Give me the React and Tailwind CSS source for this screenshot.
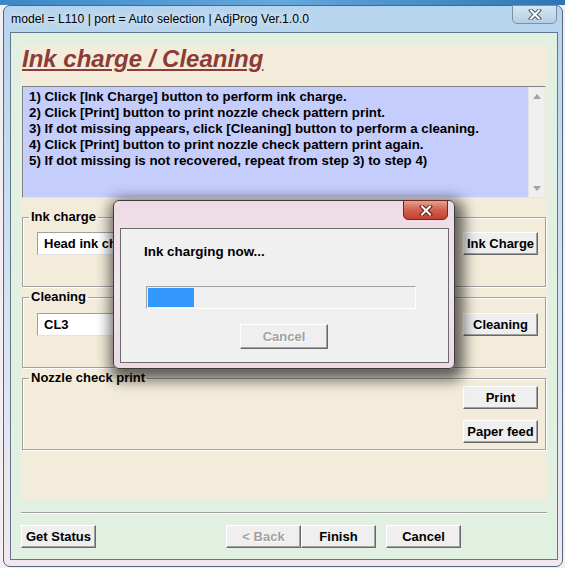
import React from "react";

// classic 3D push button
const btn =
  "h-[23px] bg-[#efefef] border border-t-white border-l-white border-r-[#696969] border-b-[#696969] shadow-[inset_-1px_-1px_0_#a0a0a0] text-[13px] leading-[16px] font-bold text-black flex items-center justify-center";
const btnOff =
  "h-[23px] bg-[#efefef] border border-t-white border-l-white border-r-[#696969] border-b-[#696969] shadow-[inset_-1px_-1px_0_#a0a0a0] text-[13px] leading-[16px] font-bold text-[#a0a0a0] [text-shadow:1px_1px_0_#fff] flex items-center justify-center";
const combo =
  "h-[23px] bg-white border border-t-[#a0a0a0] border-l-[#a0a0a0] border-r-[#e3e3e3] border-b-[#e3e3e3] pl-[6px] text-[13px] leading-[21px] font-bold";
const fieldset =
  "ml-[1px] w-[524px] border border-[#a0a0a0] shadow-[1px_1px_0_#fff,inset_1px_1px_0_#fff]";
const legend = "ml-[6px] px-[2px] text-[13px] leading-[16px] font-bold text-black";

const steps = [
  "1) Click [Ink Charge] button to perform ink charge.",
  "2) Click [Print] button to print nozzle check pattern print.",
  "3) If dot missing appears, click [Cleaning] button to perform a cleaning.",
  "4) Click [Print] button to print nozzle check pattern print again.",
  "5) If dot missing is not recovered, repeat from step 3) to step 4)",
];

// X glyph used on caption close buttons
const CloseGlyph = ({ dark }) => (
  <svg width="14" height="11" viewBox="0 0 14 11">
    <path d="M3 1.5 L11 9.5 M11 1.5 L3 9.5" stroke={dark} strokeWidth="4" strokeLinecap="square" />
    <path d="M3 1.5 L11 9.5 M11 1.5 L3 9.5" stroke="#ffffff" strokeWidth="2" strokeLinecap="square" />
  </svg>
);

const ProgressDialog = () => (
  <div className="absolute left-[113px] top-[200px] w-[342px] h-[169px] rounded-[6px] border border-[#3c3c3c] bg-gradient-to-b from-[#eedbe5] via-[#f3e6ee] to-[#ecd9e4] shadow-[3px_5px_14px_6px_rgba(0,0,0,0.6)]">
    <div className="absolute top-[-1px] right-[6px] w-[45px] h-[20px] rounded-b-[5px] border border-[#6e2a20] bg-gradient-to-b from-[#e5a193] via-[#d0604c] to-[#c2412c] flex items-center justify-center">
      <CloseGlyph dark="#5a1f17" />
    </div>
    <div className="ml-[6px] mt-[27px] w-[329px] h-[135px] border border-[#6b6b6b] bg-[#f0f0f0]">
      <div className="pl-[23px] pt-[15px] text-[13.4px] leading-[16px] font-bold text-black">
        Ink charging now...
      </div>
      <div className="ml-[25px] mt-[26px] w-[270px] h-[23px] border border-t-[#a0a0a0] border-l-[#a0a0a0] border-r-white border-b-white p-[1px]">
        <div className="w-[46px] h-full bg-[#3399ff]" />
      </div>
      <div className="ml-[119px] mt-[15px] w-[88px]">
        <div className={btnOff + " h-[25px]"}>Cancel</div>
      </div>
    </div>
  </div>
);

export default function App() {
  return (
    <div className="relative w-[565px] h-[568px] overflow-hidden bg-[#f4eef2] font-['Liberation_Sans',Arial,sans-serif]">
      {/* desktop behind */}
      <div className="h-[5px] bg-gradient-to-r from-[#3b87c6] via-[#63a9dc] to-[#2d74b2]" />

      {/* main window */}
      <div className="relative ml-[3px] w-[560px] h-[562px] rounded-[7px] border border-[#51677e] bg-gradient-to-b from-[#b6d4ed] via-[#d2e3f1] to-[#f2e8ef]">
        <div className="absolute top-[-1px] right-[5px] w-[45px] h-[19px] rounded-b-[5px] border border-[#7d90a6] bg-gradient-to-b from-[#d6e7f5] to-[#b4cde4] flex items-center justify-center">
          <CloseGlyph dark="#4a5866" />
        </div>

        {/* caption */}
        <div className="h-[26px] pl-[7px] flex items-center text-[12.2px] text-black [text-shadow:0_0_6px_#ffffff]">
          model = L110 | port = Auto selection | AdjProg Ver.1.0.0
        </div>

        {/* client area */}
        <div className="ml-[6px] w-[548px] h-[528px] border border-[#62778d] bg-[#e2f0e2] pl-[10px] pt-[12px]">
          <div className="w-[527px] h-[454px] bg-[#f3ecda]">
            <div className="h-[41px] pl-[1px] text-[24px] leading-[28px] font-bold italic underline decoration-2 underline-offset-[2px] text-[#8c3b37]">
              Ink charge / Cleaning
            </div>

            {/* instructions box */}
            <div className="ml-[1px] w-[524px] h-[112px] flex bg-[#c5cdfd] border border-t-[#828282] border-l-[#828282] border-r-[#e6e6e6] border-b-[#e6e6e6]">
              <div className="flex-1 pl-[6px] pt-[2px] text-[13.3px] leading-[16px] font-bold text-black">
                {steps.map((s) => (
                  <div key={s}>{s}</div>
                ))}
              </div>
              <div className="w-[17px] bg-[#efefef] border-l border-[#e4e4e4] flex flex-col items-center justify-between pt-[7px] pb-[6px]">
                <svg width="8" height="5" viewBox="0 0 8 5">
                  <path d="M0 5 L4 0 L8 5 Z" fill="#a3a3a3" />
                </svg>
                <svg width="8" height="5" viewBox="0 0 8 5">
                  <path d="M0 0 L8 0 L4 5 Z" fill="#a3a3a3" />
                </svg>
              </div>
            </div>

            {/* Ink charge */}
            <fieldset className={fieldset + " mt-[11px]"}>
              <legend className={legend}>Ink charge</legend>
              <div className="h-[61px] pt-[7px] pl-[14px] pr-[7px] flex items-start justify-between">
                <div className={combo + " w-[300px]"}>Head ink charge</div>
                <div className={btn + " w-[75px]"}>Ink Charge</div>
              </div>
            </fieldset>

            {/* Cleaning */}
            <fieldset className={fieldset + " mt-[2px]"}>
              <legend className={legend}>Cleaning</legend>
              <div className="h-[62px] pt-[8px] pl-[14px] pr-[7px] flex items-start justify-between">
                <div className={combo + " w-[300px]"}>CL3</div>
                <div className={btn + " w-[75px]"}>Cleaning</div>
              </div>
            </fieldset>

            {/* Nozzle check print */}
            <fieldset className={fieldset + " mt-[2px]"}>
              <legend className={legend}>Nozzle check print</legend>
              <div className="h-[63px] pr-[7px] flex flex-col items-end">
                <div className={btn + " w-[75px] h-[22px]"}>Print</div>
                <div className={btn + " w-[75px] mt-[11px]"}>Paper feed</div>
              </div>
            </fieldset>
          </div>

          {/* separator */}
          <div className="mt-[13px] w-[526px] h-[2px] border-t border-[#a0a0a0] bg-white" />

          {/* wizard buttons */}
          <div className="mt-[11px] flex">
            <div className={btn + " w-[75px]"}>Get Status</div>
            <div className={btnOff + " w-[75px] ml-[130px]"}>&lt; Back</div>
            <div className={btn + " w-[75px]"}>Finish</div>
            <div className={btn + " w-[75px] ml-[10px]"}>Cancel</div>
          </div>
        </div>
      </div>

      <ProgressDialog />
    </div>
  );
}
